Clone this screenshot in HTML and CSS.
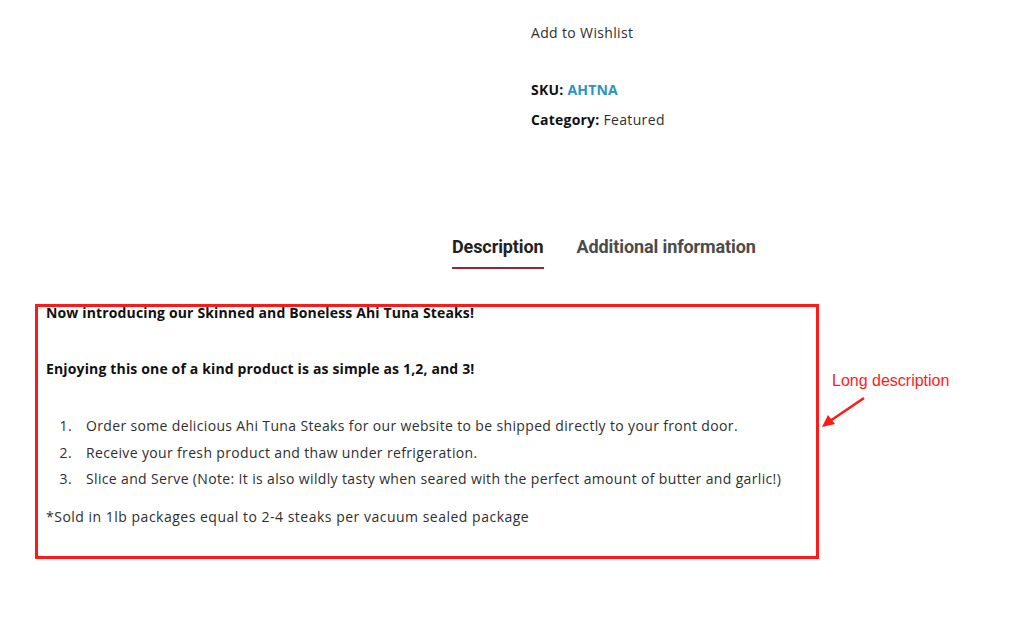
FILE: index.html
```html
<!DOCTYPE html>
<html lang="en">
<head>
    <meta charset="UTF-8">
    <meta name="viewport" content="width=device-width, initial-scale=1.0">
    <title>Ahi Tuna Steaks</title>
    <link rel="stylesheet" href="styles.css">
</head>
<body>

    <div class="summary">
        <a class="wishlist" href="#">Add to Wishlist</a>

        <div class="meta">
            <div><strong>SKU:</strong> <span class="sku">AHTNA</span></div>
            <div><strong>Category:</strong> Featured</div>
        </div>
    </div>

    <ul class="tabs">
        <li class="active">Description</li>
        <li>Additional information</li>
    </ul>

    <div class="panel">
        <p><strong>Now introducing our Skinned and Boneless Ahi Tuna Steaks!</strong></p>
        <p><strong>Enjoying this one of a kind product is as simple as 1,2, and 3!</strong></p>

        <ol>
            <li>Order some delicious Ahi Tuna Steaks for our website to be shipped directly to your front door.</li>
            <li>Receive your fresh product and thaw under refrigeration.</li>
            <li>Slice and Serve (Note: It is also wildly tasty when seared with the perfect amount of butter and garlic!)</li>
        </ol>

        <p>*Sold in 1lb packages equal to 2-4 steaks per vacuum sealed package</p>

        <!-- annotation drawn over the page -->
        <div class="highlight"></div>
        <div class="note">Long description</div>
        <svg class="arrow" width="50" height="34" viewBox="0 0 50 34">
            <line x1="44" y1="2" x2="10" y2="25" stroke="#ff1a1a" stroke-width="2.5"/>
            <polygon points="2,31 8,19 15,28" fill="#ff1a1a"/>
        </svg>
    </div>

</body>
</html>
```

FILE: styles.css
```css
/* Product page - description tab */
body {
    font-family: "Open Sans", Arial, sans-serif;
    font-size: 14px;
    letter-spacing: 0.35px;
    color: #2f2f2f;
    background-color: #fff;
    margin: 0;
    padding: 0;
}

.summary {
    padding: 20px 0 0 531px;
    line-height: 26px;
}

.wishlist {
    color: #2f2f2f;
    text-decoration: none;
}

.meta {
    margin-top: 31px;
    display: flex;
    flex-direction: column;
    gap: 4px;
}

.meta strong {
    color: #111;
    font-weight: 700;
    letter-spacing: 0.2px;
}

.sku {
    color: #2b95c1;
    font-weight: 700;
    letter-spacing: 0.2px;
}

.tabs {
    list-style: none;
    margin: 102px 0 0 452px;
    padding: 0;
    display: flex;
    gap: 33px;
    font-family: Roboto, Arial, sans-serif;
    font-size: 18px;
    font-weight: 700;
    line-height: 24px;
    letter-spacing: -0.1px;
}

.tabs li {
    color: #4b4b4b;
    padding-bottom: 8px;
    border-bottom: 2px solid transparent;
}

.tabs li.active {
    color: #222;
    border-bottom-color: #a3222f;
}

.panel {
    position: relative;
    margin-top: 31px;
    padding: 0 0 80px 46px;
    line-height: 26px;
}

.panel p {
    margin: 0 0 30px;
}

.panel p strong {
    color: #111;
    letter-spacing: 0.15px;
}

.panel ol {
    margin: 31px 0 11px;
    padding: 0;
    list-style: none;
    counter-reset: step;
}

.panel ol li {
    display: flex;
    line-height: 26.5px;
    counter-increment: step;
}

.panel ol li::before {
    content: counter(step) ".";
    flex: 0 0 26px;
    margin-right: 14px;
    text-align: right;
}

.panel p:last-of-type {
    margin-bottom: 0;
    letter-spacing: 0.5px;
}

.highlight {
    position: absolute;
    left: 35px;
    top: 4px;
    width: 778px;
    height: 249px;
    border: 3px solid #ff1a1a;
}

.note {
    position: absolute;
    left: 832px;
    top: 70px;
    font-family: "Liberation Sans", Arial, sans-serif;
    font-size: 16px;
    line-height: 22px;
    letter-spacing: 0;
    color: #ff1a1a;
}

.arrow {
    position: absolute;
    left: 820px;
    top: 96px;
}
```
